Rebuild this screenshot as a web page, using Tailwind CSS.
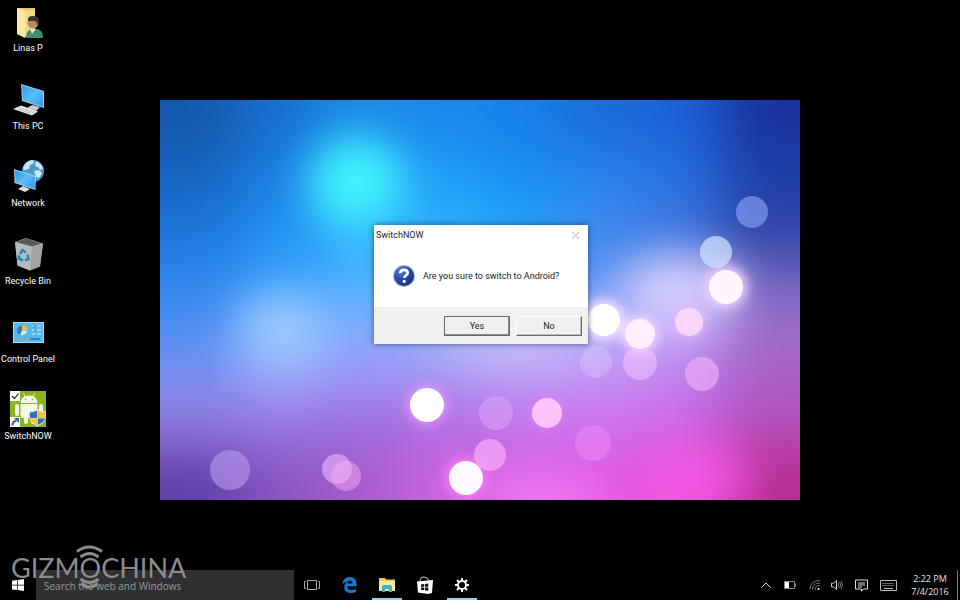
<!DOCTYPE html>
<html lang="en">
<head>
    <meta charset="UTF-8">
    <meta name="viewport" content="width=device-width, initial-scale=1.0">
    <title>SwitchNOW</title>
    <script src="https://cdn.jsdelivr.net/npm/@tailwindcss/browser@4"></script>
</head>
<body class="bg-black font-['Open_Sans','Noto_Sans',sans-serif]">
<div class="relative flex flex-col min-h-screen bg-black overflow-hidden">

    <!-- Wallpaper with the dialog on top -->
    <div class="absolute left-1/6 top-1/6 w-2/3 h-2/3 flex items-center justify-center pb-[31px] pl-[2px]">
        <svg class="absolute inset-0 w-full h-full" viewBox="0 0 640 400" preserveAspectRatio="xMidYMid slice" aria-hidden="true">
            <defs>
                <filter id="mesh" x="-100" y="-100" width="840" height="600" filterUnits="userSpaceOnUse" color-interpolation-filters="sRGB"><feGaussianBlur stdDeviation="28"/></filter>
                <filter id="soft" x="-100%" y="-100%" width="300%" height="300%" color-interpolation-filters="sRGB"><feGaussianBlur stdDeviation="22"/></filter>
                <filter id="glow" x="-100%" y="-100%" width="300%" height="300%" color-interpolation-filters="sRGB"><feGaussianBlur stdDeviation="6"/></filter>
            </defs>
            <g id="cells" filter="url(#mesh)"></g>
            <g filter="url(#soft)">
                <ellipse cx="196" cy="82" rx="46" ry="44" fill="#44fcff" fill-opacity=".95"/>
                <ellipse cx="122" cy="230" rx="42" ry="34" fill="#aad4ff" fill-opacity=".8"/>
                <ellipse cx="520" cy="190" rx="60" ry="34" fill="#ecdcff" fill-opacity=".8"/>
                <ellipse cx="345" cy="248" rx="80" ry="10" fill="#ecd8ff" fill-opacity=".8"/>
                <ellipse cx="380" cy="404" rx="56" ry="22" fill="#ff88ff" fill-opacity=".7"/>
                <ellipse cx="540" cy="380" rx="50" ry="34" fill="#fc5cf0" fill-opacity=".7"/>
            </g>
            <g filter="url(#glow)">
                <circle cx="566" cy="187" r="21" fill="#f4d0ff"/>
                <circle cx="444" cy="220" r="21" fill="#f0e0ff"/>
                <circle cx="480" cy="234" r="18" fill="#fcd8ff"/>
                <circle cx="529" cy="222" r="15" fill="#f0b8ff"/>
                <circle cx="267" cy="305" r="19" fill="#ee96ff"/>
                <circle cx="306" cy="378" r="20" fill="#ff80f8"/>
                <circle cx="387" cy="313" r="15" fill="#ec80f8"/>
            </g>
            <g fill="#fff">
                <circle cx="592" cy="112" r="16" fill="#8ca8f8" fill-opacity=".6"/>
                <circle cx="556" cy="152" r="16" fill="#d4e4ff" fill-opacity=".7"/>
                <circle cx="566" cy="187" r="17" fill="#fff6ff"/>
                <circle cx="444" cy="220" r="16"/>
                <circle cx="480" cy="263" r="17" fill="#f8c8ff" fill-opacity=".5"/>
                <circle cx="480" cy="234" r="15" fill="#fff0ff" fill-opacity=".95"/>
                <circle cx="529" cy="222" r="14" fill="#ffe0ff" fill-opacity=".75"/>
                <circle cx="436" cy="262" r="16" fill-opacity=".18"/>
                <circle cx="542" cy="274" r="17" fill="#f4b4ff" fill-opacity=".6"/>
                <circle cx="267" cy="305" r="17"/>
                <circle cx="336" cy="313" r="17" fill="#e8b0ff" fill-opacity=".4"/>
                <circle cx="387" cy="313" r="15" fill="#ffd0fc" fill-opacity=".85"/>
                <circle cx="330" cy="355" r="16" fill="#ffb8ff" fill-opacity=".6"/>
                <circle cx="433" cy="343" r="18" fill="#f890ff" fill-opacity=".4"/>
                <circle cx="306" cy="378" r="17" fill="#fffaff"/>
                <circle cx="70" cy="370" r="20" fill="#c8a8f8" fill-opacity=".5"/>
                <circle cx="177" cy="369" r="15" fill="#f0c0ff" fill-opacity=".55"/>
                <circle cx="186" cy="376" r="15" fill="#ffb0f8" fill-opacity=".45"/>
            </g>
        </svg>

        <section role="dialog" aria-labelledby="dialogTitle" class="relative w-[214px] bg-white text-[#1c1c1c] font-['Roboto',sans-serif] text-[9px] leading-3 shadow-[0_0_6px_rgba(0,0,0,0.5)]">
            <header class="flex items-center justify-between h-[20px] pl-[2px] pr-2">
                <h1 id="dialogTitle">SwitchNOW</h1>
                <button aria-label="Close"><svg width="9" height="9" viewBox="0 0 9 9" fill="none" stroke="#b0b0b0"><path d="M1 1l7 7M8 1l-7 7"/></svg></button>
            </header>
            <div class="flex items-center gap-[7px] h-[62px] pl-[18px]">
                <svg width="24" height="24" viewBox="0 0 24 24" aria-hidden="true">
                    <defs><radialGradient id="ask" cx=".35" cy=".25" r=".8"><stop offset="0" stop-color="#5a80d8"/><stop offset=".5" stop-color="#2a4cae"/><stop offset="1" stop-color="#16307c"/></radialGradient></defs>
                    <circle cx="12" cy="12" r="11" fill="#b4bcd4"/>
                    <circle cx="12" cy="12" r="10" fill="url(#ask)"/>
                    <path d="M8.200 9.200q.2-3.400 3.800-3.400 3.700 0 3.700 3 0 1.500-1.700 2.600-1.600 1-1.600 2.600" fill="none" stroke="#fff" stroke-width="2.700"/>
                    <circle cx="12.200" cy="17.400" r="1.600" fill="#fff"/>
                </svg>
                <p class="whitespace-nowrap">Are you sure to switch to Android?</p>
            </div>
            <footer class="flex justify-end gap-[6px] bg-[#f0f0f0] h-[37px] pt-[9px] pr-[6px]">
                <button autofocus class="w-[66px] h-5 border border-[#696969] shadow-[inset_-1px_-1px_0_#8a8a8a] outline-none">Yes</button>
                <button class="w-[66px] h-5 border border-t-white border-l-white border-r-[#696969] border-b-[#696969] shadow-[inset_-1px_-1px_0_#c0c0c0] outline-none">No</button>
            </footer>
        </section>
    </div>

    <!-- Desktop icons -->
    <ul class="relative grid grid-rows-6 w-14 h-[466px] text-center font-['Roboto',sans-serif] text-[9px] leading-[18px] text-white whitespace-nowrap">
        <li class="flex flex-col items-center pt-[3px]">
            <svg class="shrink-0" width="36" height="36" viewBox="0 0 36 36" aria-hidden="true">
                <path d="M7 5h18v27l-9 2-9-3z" fill="#e8c864"/>
                <path d="M7 5l8 3v27l-8-4z" fill="#fbe9a4"/>
                <path d="M15 7h10v24l-10 3z" fill="#f3da84"/>
                <path d="M16 35q0-9 7-9h3q7 0 7 9z" fill="#3f8f6c"/>
                <path d="M20 26l2 5 4-5z" fill="#d8f0e8"/>
                <circle cx="23" cy="20" r="5.500" fill="#b88a66"/>
                <path d="M18 18q-1-5 5-5t6 5q0 3-1.500 4-1-4-3-4z" fill="#383430"/>
            </svg>
            <span>Linas P</span>
        </li>
        <li class="flex flex-col items-center pt-[3px]">
            <svg class="shrink-0" width="36" height="36" viewBox="0 0 36 36" aria-hidden="true">
                <defs><linearGradient id="scr" x2="1" y2="1"><stop offset="0" stop-color="#2f96e4"/><stop offset=".5" stop-color="#5cbcf8"/><stop offset="1" stop-color="#2c94e8"/></linearGradient></defs>
                <path d="M17 27l5-3 8 2-4 4z" fill="#c8ccd0"/>
                <path d="M11 3l23 7v17l-22-7z" fill="#8fd0f8"/>
                <path d="M12 4.500l21 6.300v14.700l-20-6.300z" fill="url(#scr)"/>
                <path d="M3 28l8-3.500 17 6-6 4z" fill="#e4e6e8"/>
                <path d="M7 27.600l14 5M9 26.400l15 5.200" stroke="#a4a8ac" stroke-width=".6" fill="none"/>
            </svg>
            <span>This PC</span>
        </li>
        <li class="flex flex-col items-center pt-[3px]">
            <svg class="shrink-0" width="36" height="36" viewBox="0 0 36 36" aria-hidden="true">
                <circle cx="23" cy="13" r="11" fill="#4a9cc8"/>
                <path d="M15 6q4-4 8-4l1 3-4 2-1 4-5 1-1-2zM26 3q6 3 7 8l-3 1-2-3-3-1zM24 13l5-1 3 3-3 5-3-1z" fill="#cfe6ec"/>
                <path d="M8 31l5-3 7 3-5 3z" fill="#d8dcde"/>
                <path d="M4 11l22 7-.5 14-21-7z" fill="#90d0f6"/>
                <path d="M5 12.500l20 6.300-.5 11.600-19-6.300z" fill="url(#scr)"/>
            </svg>
            <span>Network</span>
        </li>
        <li class="flex flex-col items-center pt-[3px]">
            <svg class="shrink-0" width="36" height="36" viewBox="0 0 36 36" aria-hidden="true">
                <path d="M5 6l11-4 17 5.500-3 23-10 4-12.500-5z" fill="#9a9c9e"/>
                <path d="M5 6l17 5-2 23.500-12.500-5z" fill="#b8babc"/>
                <path d="M22 11l11-3.500-3 23-10 4z" fill="#a4a4a6"/>
                <path d="M6.500 6l9.500-3.400 15 4.900-9 2.700z" fill="#56585a"/>
                <g fill="none" stroke="#2f86c4" stroke-width="2.600"><path d="M10 18l2.500-4 3.500 2.500"/><path d="M17.500 18.500l1 4.500-3.500 1.500"/><path d="M13 24.500l-4.500-2 1-3"/></g>
            </svg>
            <span>Recycle Bin</span>
        </li>
        <li class="flex flex-col items-center pt-[3px]">
            <svg class="shrink-0" width="36" height="36" viewBox="0 0 36 36" aria-hidden="true">
                <path d="M3 8h31v21h-31z" fill="#a8dcf8"/>
                <path d="M4 9h29v19h-29z" fill="#58b8ec"/>
                <circle cx="12" cy="16.500" r="5" fill="#2f7fc0"/>
                <path d="M12 16.500v-5.500a5.500 5.500 0 0 1 5.500 5.500z" fill="#f8b83c"/>
                <path d="M12 16.500h5a5 5 0 0 1-7 4.500z" fill="#d4ecf8"/>
                <path d="M22 12h3M27 12h4M22 16h3M27 16h4M22 20h3M27 20h4" stroke="#b4e0f8" stroke-width="1.600"/>
                <path d="M24 11v3M25 15v3" stroke="#2c80b8"/>
                <path d="M7 25h12" stroke="#b0a080" stroke-width="1.500"/><path d="M20 25h10" stroke="#2878b0" stroke-width="1.500"/>
            </svg>
            <span>Control Panel</span>
        </li>
        <li class="flex flex-col items-center pt-[3px]">
            <svg class="shrink-0" width="36" height="36" viewBox="0 0 36 36" aria-hidden="true">
                <path d="M0 0h36v36h-36z" fill="#8cb41e"/>
                <g fill="#f4f8ec">
                    <path d="M10.500 12q.5-7.500 8.500-7.500t8.500 7.500z"/>
                    <path d="M10.500 13h17v12q0 2-2 2h-13q-2 0-2-2z"/>
                    <rect x="5" y="13" width="4" height="12" rx="2"/>
                    <rect x="29" y="13" width="4" height="12" rx="2"/>
                    <rect x="14" y="24" width="4" height="9" rx="2"/>
                    <rect x="21" y="24" width="4" height="9" rx="2"/>
                    <path d="M13.500 2.500l2 4M24.500 2.500l-2 4" stroke="#f4f8ec"/>
                </g>
                <circle cx="15.500" cy="8.500" r=".8" fill="#86ac1c"/><circle cx="22.500" cy="8.500" r=".8" fill="#86ac1c"/>
                <path d="M0 0h10v10h-10z" fill="#fff"/><path d="M2 5l2.500 2.500 4-5" fill="none" stroke="#222" stroke-width="1.200"/>
                <path d="M0 26h10v10h-10z" fill="#fff"/><path d="M2.500 34.500q0-4 4-5" fill="none" stroke="#2c68b4" stroke-width="2.200"/><path d="M4 27h5v5z" fill="#2c68b4"/>
                <path d="M27.500 18q4 2.500 8.500 2.500v5q0 6-8.500 10-8.500-4-8.500-10v-5q4.500 0 8.500-2.500z" fill="#e8e8e0"/>
                <path d="M27.200 19.500v7.500h-7.400v-5.500q4 0 7.400-2z" fill="#2f72b4"/><path d="M27.800 19.500v7.500h7.400v-5.500q-4 0-7.400-2z" fill="#f4c440"/>
                <path d="M27.200 27.500v6.500q-6.400-3-7.200-6.500z" fill="#f4c440"/><path d="M27.800 27.500v6.500q6.400-3 7.200-6.500z" fill="#2f72b4"/>
            </svg>
            <span>SwitchNOW</span>
        </li>
    </ul>

    <!-- Taskbar -->
    <nav class="relative mt-auto flex items-stretch h-[30px] text-[#e4e4e4]">
        <button aria-label="Start" class="w-9 flex items-center justify-center">
            <svg width="12" height="12" viewBox="0 0 12 12" fill="#fff"><path d="M0 1.700l5-.7v4.700h-5zM5.700.900l6.300-.9v5.700h-6.300zM0 6.400h5v4.700l-5-.7zM5.700 6.400h6.300v5.600l-6.300-.9z"/></svg>
        </button>
        <input type="text" aria-label="Search the web and Windows" placeholder="Search the web and Windows" class="w-[258px] bg-[#303030] pl-2 pt-[2px] text-[10px] text-[#999] placeholder:text-[#999] outline-none">
        <div class="flex justify-between w-[180px] ml-[3px]">
            <button aria-label="Task view" class="w-[30px] flex items-center justify-center">
                <svg width="16" height="12" viewBox="0 0 16 12" fill="none" stroke="#aaa"><path d="M3.500 1.500h9v9h-9zM2 2.500h-1.500v7h1.500M14 2.500h1.500v7h-1.500"/></svg>
            </button>
            <button aria-label="Edge" class="w-[30px] flex items-center justify-center">
                <svg width="15" height="16" viewBox="0 0 15 16" fill="#1878cc"><path d="M0 7.500Q1 0 7.700 0 14.700 0 14.700 7.800v1.500H5q.2 3.700 4.500 3.700 2.500 0 4.500-1.300v3.200q-2.300 1.100-5.300 1.100-6.400 0-6.400-6 0-3.700 3.200-5.500Q2 5 0 7.500zM5.200 6.600h5.200q0-3-2.500-3-2.300 0-2.700 3z"/></svg>
            </button>
            <button aria-label="File Explorer" class="w-[30px] flex items-center justify-center border-b-2 border-t-2 border-t-transparent border-b-[#9cd0e8]">
                <svg width="16" height="14" viewBox="0 0 16 14"><path d="M0 0h6l1 1.500h9v11.500h-16z" fill="#f0cc60"/><path d="M0 3h16v10h-16z" fill="#fbe6a0"/><path d="M3 14v-5q0-2 2-2h6q2 0 2 2v5h-3v-3h-4v3z" fill="#3cb0c4"/></svg>
            </button>
            <button aria-label="Store" class="w-[30px] flex items-center justify-center">
                <svg width="16" height="18" viewBox="0 0 16 18"><path d="M3 5.500q0-4.500 4-4.500t5 4" fill="none" stroke="#ccc"/><path d="M0 5.500l16-1.500-1 13-4 1-10-1.500z" fill="#fff"/><path d="M4 8.500l3-.4v2.700h-3zM7.800 8l3.500-.4v3.200h-3.500zM4 11.500h3v2.700l-3-.4zM7.800 11.500h3.500v3.200l-3.500-.4z" fill="#111"/></svg>
            </button>
            <button aria-label="Settings" class="w-[30px] flex items-center justify-center border-b-2 border-t-2 border-t-transparent border-b-[#9cd0e8]">
                <svg width="14" height="14" viewBox="0 0 14 14" fill="none" stroke="#fff"><circle cx="7" cy="7" r="4" stroke-width="1.800"/><path d="M7 0v3M7 11v3M0 7h3M11 7h3M2 2l2.200 2.200M9.800 9.800l2.200 2.200M12 2l-2.200 2.200M4.200 9.800l-2.200 2.200" stroke-width="2"/></svg>
            </button>
        </div>
        <div class="ml-auto flex items-center gap-[10px]">
            <button aria-label="Show hidden icons"><svg width="10" height="6" viewBox="0 0 10 6" fill="none" stroke="#ddd"><path d="M.5 5.500L5 1l4.500 4.500"/></svg></button>
            <svg class="mx-[3px]" width="12" height="8" viewBox="0 0 12 8" aria-hidden="true"><path d="M.5.500h10v7h-10zM11.500 2.500v3" fill="none" stroke="#888"/><path d="M1 1h4v6h-4z" fill="#fff"/></svg>
            <svg width="12" height="12" viewBox="0 0 12 12" fill="none" stroke="#777" aria-hidden="true"><path d="M1 10.500q0-9 10-9M3.500 11q0-7 7.500-7M6 11.200q0-4.700 5-4.700"/><circle cx="9.500" cy="10" r="1" fill="#fff" stroke="none"/></svg>
            <svg width="12" height="12" viewBox="0 0 12 12" fill="none" stroke="#ccc" aria-hidden="true"><path d="M.5 4.200h2L5.500 1.500v9L2.500 7.800h-2z"/><path d="M7 4.200q1.300 1.800 0 3.600M8.500 3q2.300 3 0 6M10 2q3 4 0 8" stroke="#999" stroke-width=".8"/></svg>
            <button aria-label="Notifications" class="ml-[2px]"><svg width="13" height="13" viewBox="0 0 13 13" fill="none" stroke="#ddd"><path d="M.5 1h12v9h-4l-2 2.300v-2.300h-6zM3 4h7M3 6h7M3 8h4"/></svg></button>
            <button aria-label="Touch keyboard" class="ml-[2px]"><svg width="17" height="11" viewBox="0 0 17 11" fill="none" stroke="#bbb"><path d="M.5.500h16v10h-16z"/><path d="M2.500 3.500h12M2.500 5.500h12" stroke-dasharray="1 1"/><path d="M4 8.500h9"/></svg></button>
            <time datetime="2016-07-04T14:22" class="w-[42px] ml-[2px] text-center text-[9px] leading-[13px]">2:22 PM<br>7/4/2016</time>
            <span class="-ml-[4px] mr-[2px] w-px h-full bg-[#777]"></span>
        </div>
    </nav>

    <!-- Watermark -->
    <div class="absolute left-[11px] bottom-[9px] w-[174px] h-[46px] pointer-events-none text-[#8c8c8c]">
        <span class="absolute left-0 top-[7px] font-['Lato',sans-serif] text-[27px] leading-8">GIZMOCHINA</span>
        <svg class="absolute left-[62px] top-0" width="32" height="46" viewBox="0 0 32 46" fill="none" stroke="#8c8c8c" stroke-width="3" aria-hidden="true"><path d="M4 6.500q12-9 25 0M7.500 12q9-7 18 0M7.500 34q9 7 18 0M8 38.500q8 7 17 0"/></svg>
    </div>
</div>

<script>
    // wallpaper colours, 8 columns by 8 rows
    var rows = [
        '1458ac 1870d2 1c8ae6 1a88ea 1880ea 1a6cd8 1c60d8 1a34a0',
        '1664c0 1c80e4 24a4fc 22a0f8 1890f0 2a84ec 2672e0 1e40ac',
        '1c74d8 2290f0 30b4fe 2cb0ff 20a0f8 3c88ee 3c74de 2c40a8',
        '2a84ea 34a0fc 44b0ff 3cb0ff 40a8ff 5a90f4 6c94f0 6864bc',
        '4c90f4 70acff 80b0ff 88b0f8 a8b0f8 b0b4ff c8b0fc a070cc',
        '7c90f0 a0a8fc a098f8 a898f4 b8a0f8 c498f4 bc80ec a860c8',
        '9478e0 9878e0 9c6cdc b06ce0 c070e8 cc6cec d068e8 b850bc',
        '6040a8 8854c0 a85ccc cc64e0 dc64e4 e45ce4 ec54d8 b82c94'
    ];
    var cells = document.getElementById('cells');
    rows.forEach(function (row, r) {
        row.split(' ').forEach(function (color, c) {
            var rect = document.createElementNS('http://www.w3.org/2000/svg', 'rect');
            var x = c === 0 ? -100 : c * 80;
            var y = r === 0 ? -100 : r * 50;
            rect.setAttribute('x', x);
            rect.setAttribute('y', y);
            rect.setAttribute('width', (c === 7 ? 740 : (c + 1) * 80) - x);
            rect.setAttribute('height', (r === 7 ? 500 : (r + 1) * 50) - y);
            rect.setAttribute('fill', '#' + color);
            cells.appendChild(rect);
        });
    });
</script>
</body>
</html>
